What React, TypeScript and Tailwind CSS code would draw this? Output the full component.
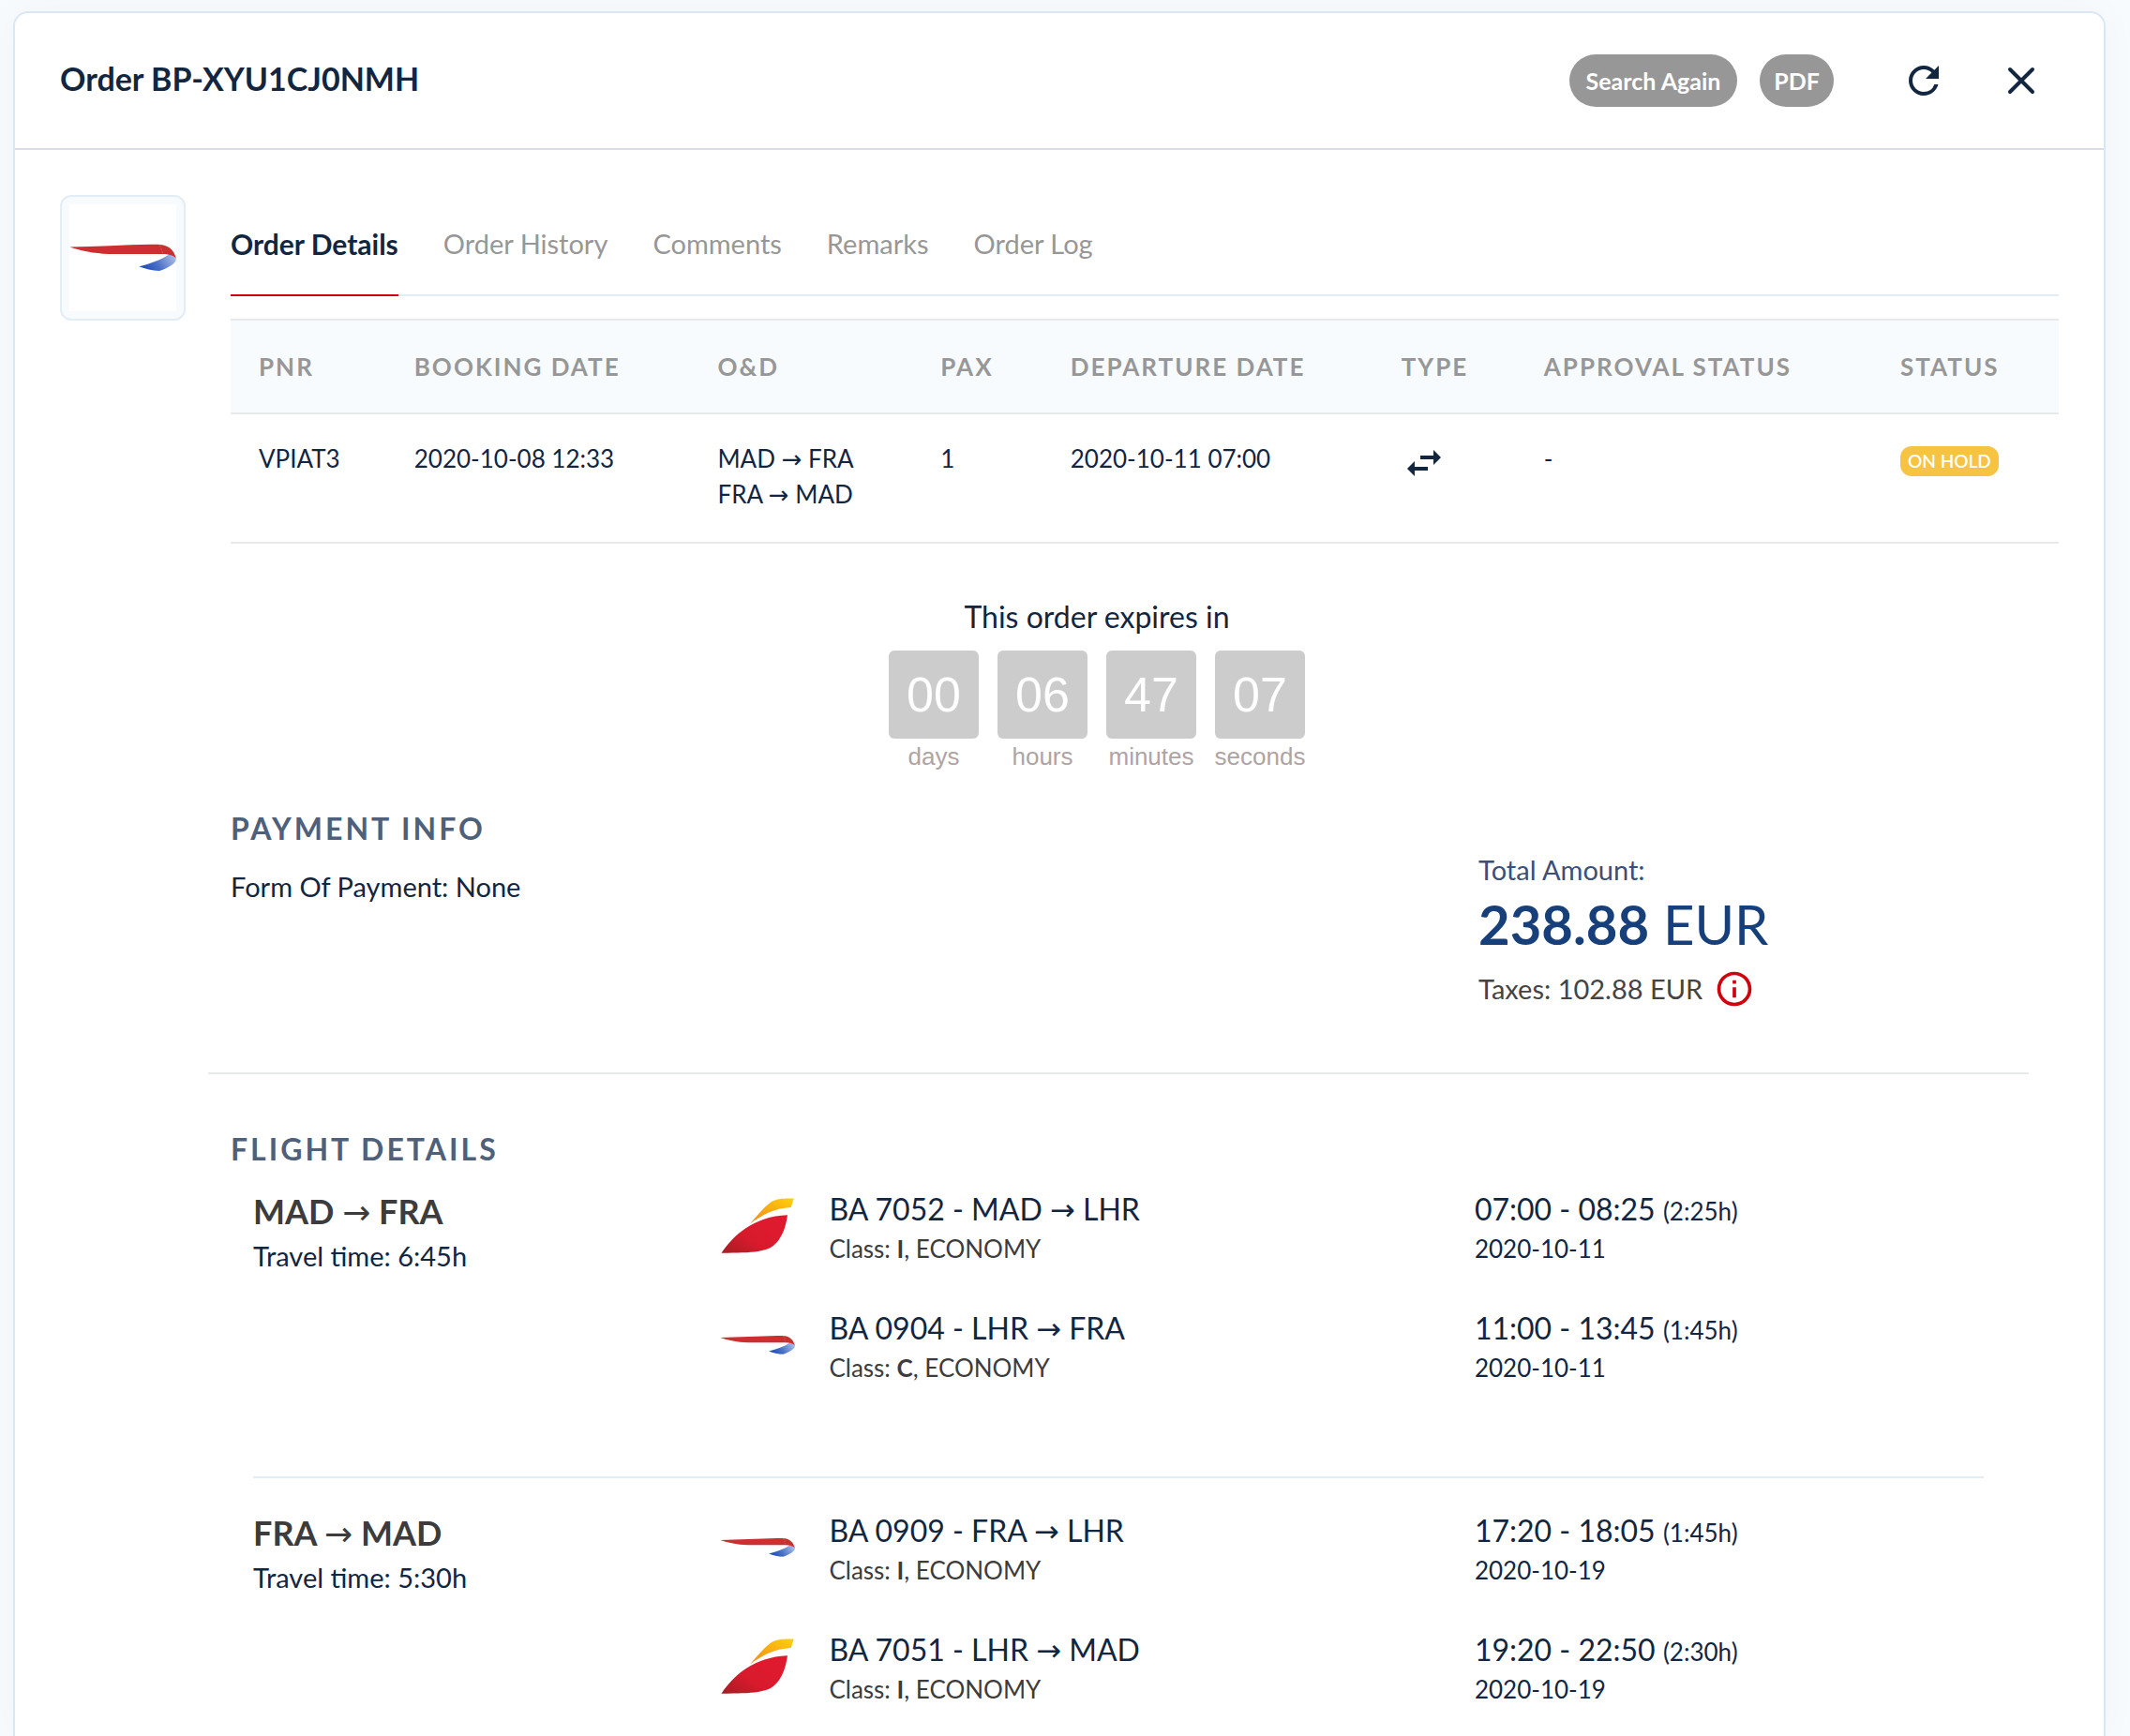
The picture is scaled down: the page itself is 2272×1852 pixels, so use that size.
import { MdOutlineInfo, MdRefresh, MdSwapHoriz } from "react-icons/md";

type Airline = "BA" | "IB";

interface Flight {
  airline: Airline;
  title: string;
  cabin: string;
  time: string;
  duration: string;
  date: string;
}

interface Leg {
  route: string;
  travelTime: string;
  flights: Flight[];
}

const tabs = ["Order Details", "Order History", "Comments", "Remarks", "Order Log"];

const columns = [
  { label: "PNR", width: "w-[8.5%]" },
  { label: "BOOKING DATE", width: "w-[16.6%]" },
  { label: "O&D", width: "w-[12.2%]" },
  { label: "PAX", width: "w-[7.1%]" },
  { label: "DEPARTURE DATE", width: "w-[18.1%]" },
  { label: "TYPE", width: "w-[7.8%]" },
  { label: "APPROVAL STATUS", width: "w-[19.5%]" },
  { label: "STATUS", width: "w-[10.2%]" },
];

const countdown = [
  { value: "00", unit: "days" },
  { value: "06", unit: "hours" },
  { value: "47", unit: "minutes" },
  { value: "07", unit: "seconds" },
];

const legs: Leg[] = [
  {
    route: "MAD → FRA",
    travelTime: "6:45h",
    flights: [
      { airline: "IB", title: "BA 7052 - MAD → LHR", cabin: "I", time: "07:00 - 08:25", duration: "(2:25h)", date: "2020-10-11" },
      { airline: "BA", title: "BA 0904 - LHR → FRA", cabin: "C", time: "11:00 - 13:45", duration: "(1:45h)", date: "2020-10-11" },
    ],
  },
  {
    route: "FRA → MAD",
    travelTime: "5:30h",
    flights: [
      { airline: "BA", title: "BA 0909 - FRA → LHR", cabin: "I", time: "17:20 - 18:05", duration: "(1:45h)", date: "2020-10-19" },
      { airline: "IB", title: "BA 7051 - LHR → MAD", cabin: "I", time: "19:20 - 22:50", duration: "(2:30h)", date: "2020-10-19" },
    ],
  },
];

function BritishAirwaysLogo({ className }: { className: string }) {
  return (
    <svg viewBox="0 0 114 114" className={className} role="img" aria-label="British Airways">
      <defs>
        <linearGradient id="ba-blue" x1="0" y1="0.6" x2="1" y2="0.3">
          <stop offset="0" stopColor="#1c49b4" />
          <stop offset="0.45" stopColor="#4a70c6" />
          <stop offset="1" stopColor="#a9bbe6" />
        </linearGradient>
      </defs>
      <path d="M74.3 66.3C86 63.5 97 59.5 106 53.5C110 54 112.5 55.5 113.8 57.5C114.5 62.5 107 67 96 71C88 70.5 81 69 74.3 66.3Z" fill="url(#ba-blue)" />
      <path d="M0.5 45.6C28 45 58 43.2 86 42.7C91 42.6 96 42.7 99 43.2C107 44.5 112 50 113.8 57.5C111 54.5 106 53 99 53L42 53C26 52.6 12 49.5 0.5 45.6Z" fill="#cb2f30" />
      <path d="M96.5 43.5L99.8 52.5" stroke="#dd7a78" strokeWidth="0.6" strokeDasharray="2 1.5" />
    </svg>
  );
}

function IberiaLogo({ className }: { className: string }) {
  return (
    <svg viewBox="0 0 80 80" className={className} role="img" aria-label="Iberia">
      <defs>
        <linearGradient id="ib-red" x1="0" y1="1" x2="0.7" y2="0.4">
          <stop offset="0" stopColor="#a31d22" />
          <stop offset="0.6" stopColor="#d71a2c" />
          <stop offset="1" stopColor="#dd1a2e" />
        </linearGradient>
        <linearGradient id="ib-yellow" x1="0" y1="1" x2="1" y2="0">
          <stop offset="0" stopColor="#ef8a1d" />
          <stop offset="0.5" stopColor="#f8ab12" />
          <stop offset="1" stopColor="#fdd20a" />
        </linearGradient>
      </defs>
      <path d="M1.5 68.7C14 50 36 29.5 72 28.2C70 41 67 50 60.5 57.5C51.5 68 36 68.5 1.5 68.7Z" fill="url(#ib-red)" />
      <path d="M32 37.5C41 27.5 48 18.5 55 14C62 10.2 69 10.3 78.7 10.5L75.7 20C58 21 45 28 32 37.5Z" fill="url(#ib-yellow)" />
    </svg>
  );
}

function AirlineLogo({ airline, className }: { airline: Airline; className: string }) {
  return airline === "BA" ? <BritishAirwaysLogo className={className} /> : <IberiaLogo className={className} />;
}

/** Sets the arrow of an airport pair in a face with a solid arrow head. */
function Route({ text }: { text: string }) {
  const [from, to] = text.split("→");
  return (
    <>
      {from}
      <span className="font-['DejaVu_Sans',sans-serif] leading-none font-normal">→</span>
      {to}
    </>
  );
}

function Header() {
  return (
    <header className="flex items-center border-b-2 border-[#dadcec] py-11 pr-16 pl-12">
      <h1 className="flex-1 pb-1 text-[34px] leading-[48px] font-bold">Order BP-XYU1CJ0NMH</h1>
      <div className="flex gap-6 text-[25px] leading-[56px] font-bold text-white">
        <button type="button" className="rounded-full bg-[#979797] px-[18px]">Search Again</button>
        <button type="button" className="rounded-full bg-[#979797] px-[15px]">PDF</button>
      </div>
      <button type="button" aria-label="Refresh" className="ml-[72px]">
        <MdRefresh className="size-12" />
      </button>
      <button type="button" aria-label="Close" className="ml-14">
        <svg viewBox="0 0 48 48" className="size-12" fill="none" stroke="currentColor" strokeWidth="4" strokeLinecap="round">
          <path d="M12 12L36 36M36 12L12 36" />
        </svg>
      </button>
    </header>
  );
}

function Tabs() {
  return (
    <nav className="flex gap-12 border-b-2 border-[#e3edf6]" role="tablist">
      {tabs.map((tab, i) => (
        <button
          key={tab}
          type="button"
          role="tab"
          aria-selected={i === 0}
          className={
            i === 0
              ? "-mb-0.5 border-b-2 border-[#d0000f] pt-9 pb-[38px] text-[30px] leading-[32px] font-bold"
              : "pt-9 pb-[38px] text-[29px] leading-[32px] text-[#979797]"
          }
        >
          {tab}
        </button>
      ))}
    </nav>
  );
}

function OrderTable() {
  return (
    <table className="mt-6 w-full table-fixed border-separate border-spacing-0 text-left">
      <thead>
        <tr className="bg-[#f7fbfe] text-[26px] leading-[34px] text-[#979797]">
          {columns.map((c) => (
            <th key={c.label} scope="col" className={`${c.width} border-y-2 border-[#e8e9ea] py-8 pl-[30px] font-bold tracking-[2px] whitespace-nowrap`}>
              {c.label}
            </th>
          ))}
        </tr>
      </thead>
      <tbody>
        <tr className="align-top text-[26px] leading-[38px] whitespace-nowrap *:border-b-2 *:border-[#e8e9ea] *:pt-7 *:pb-8 *:pl-[30px]">
          <td>VPIAT3</td>
          <td>2020-10-08 12:33</td>
          <td>
            <Route text="MAD → FRA" />
            <br />
            <Route text="FRA → MAD" />
          </td>
          <td>1</td>
          <td>2020-10-11 07:00</td>
          <td>
            <MdSwapHoriz className="size-12" aria-label="Round trip" />
          </td>
          <td>-</td>
          <td>
            <span className="inline-block rounded-xl bg-[#f6c343] px-2 align-middle text-[19px] leading-[32px] font-semibold text-white">ON HOLD</span>
          </td>
        </tr>
      </tbody>
    </table>
  );
}

function Countdown() {
  return (
    <section className="flex flex-col items-center pt-[54px] pr-[102px]">
      <h2 className="text-[32px] leading-[48px]">This order expires in</h2>
      <div className="mt-3 flex gap-5 font-['Liberation_Sans',Arial,sans-serif]">
        {countdown.map((c) => (
          <div key={c.unit} className="flex w-24 flex-col items-center">
            <div className="w-full rounded-md bg-[#ccc] text-center text-[52px] leading-[94px] text-white">{c.value}</div>
            <div className="text-[26px] leading-[38px] text-[#aea4a4]">{c.unit}</div>
          </div>
        ))}
      </div>
    </section>
  );
}

function SectionTitle({ children }: { children: string }) {
  return <h2 className="text-[32px] leading-[40px] font-bold tracking-[3px] text-[#4e607a]">{children}</h2>;
}

function Payment() {
  return (
    <section className="mr-8 -ml-6 flex border-b-2 border-[#e8e9ea] pt-[38px] pb-[66px] pl-6">
      <div className="w-[69.4%]">
        <SectionTitle>PAYMENT INFO</SectionTitle>
        <p className="mt-[22px] text-[29px] leading-[40px]">Form Of Payment: None</p>
      </div>
      <div className="pt-11">
        <p className="text-[29px] leading-[40px] text-[#3b4f77]">Total Amount:</p>
        <p className="text-[58px] leading-[76px] text-[#173f7a]">
          <strong className="font-bold">238.88</strong> EUR
        </p>
        <div className="mt-2 flex items-center gap-3 text-[29px] leading-[46px] text-[#444]">
          <span>Taxes: 102.88 EUR</span>
          <button type="button" aria-label="Tax details" className="text-[#d0000f]">
            <MdOutlineInfo className="size-11" />
          </button>
        </div>
      </div>
    </section>
  );
}

function FlightRow({ flight }: { flight: Flight }) {
  return (
    <li className="flex">
      <AirlineLogo airline={flight.airline} className="mr-9 size-20 shrink-0" />
      <div className="flex-1">
        <p className="text-[32px] leading-[44px]">
          <Route text={flight.title} />
        </p>
        <p className="text-[26px] leading-[40px] text-[#3c3c3c]">
          Class: <strong className="font-bold">{flight.cabin}</strong>, ECONOMY
        </p>
      </div>
      <div className="w-[40.3%]">
        <p className="text-[32px] leading-[44px]">
          {flight.time} <span className="text-[26px] leading-none">{flight.duration}</span>
        </p>
        <p className="text-[26px] leading-[40px]">{flight.date}</p>
      </div>
    </li>
  );
}

function Flights() {
  return (
    <section className="pt-[60px]">
      <SectionTitle>FLIGHT DETAILS</SectionTitle>
      <div className="mt-[22px] mr-20 ml-6">
        {legs.map((leg, i) => (
          <article key={leg.route} className={i === 0 ? "flex pb-24" : "flex border-t-2 border-[#e3edf6] pt-[34px]"}>
            <div className="w-[27%] leading-[48px]">
              <h3 className="text-[36px] font-bold text-[#3c3c3c]">
                <Route text={leg.route} />
              </h3>
              <p className="text-[29px]">Travel time: {leg.travelTime}</p>
            </div>
            <ul className="flex flex-1 flex-col gap-[43px]">
              {leg.flights.map((f) => (
                <FlightRow key={f.title} flight={f} />
              ))}
            </ul>
          </article>
        ))}
      </div>
    </section>
  );
}

export default function App() {
  return (
    <div className="flex min-h-screen flex-col bg-[#f7fbfe] pt-3 pr-[26px] pl-[14px] font-['Lato',sans-serif] text-[#12263f]">
      <main className="flex-1 rounded-t-2xl border-2 border-b-0 border-[#dbe7f3] bg-white shadow-[0_0_40px_rgba(18,38,63,0.03)]">
        <Header />
        <div className="flex gap-12 px-12 pt-12">
          <div className="size-[134px] shrink-0 rounded-xl border-2 border-[#e3edf6] bg-[#f7fbfe] p-2">
            <AirlineLogo airline="BA" className="size-full bg-white" />
          </div>
          <div className="min-w-0 flex-1">
            <Tabs />
            <OrderTable />
            <Countdown />
            <Payment />
            <Flights />
          </div>
        </div>
      </main>
    </div>
  );
}
